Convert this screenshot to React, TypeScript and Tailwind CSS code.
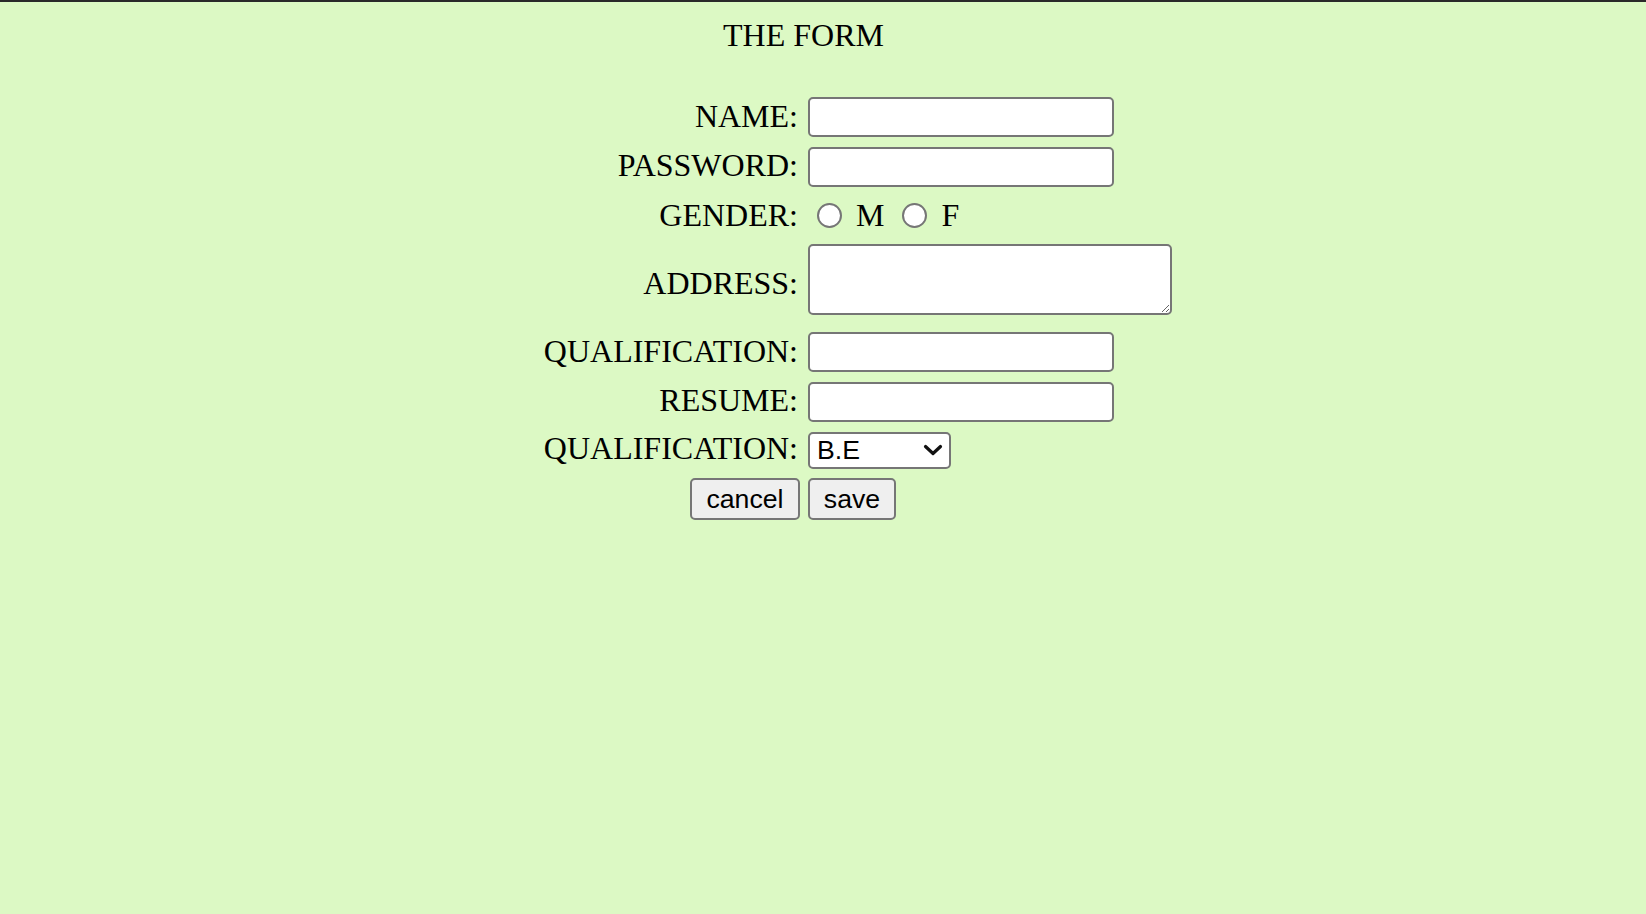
import type { ReactNode } from "react";

// Page is a 2x-scale rendering of a plain HTML table form, so every
// size here is doubled from the browser defaults.
const labelClass =
  "w-[261px] shrink-0 pr-[2px] text-right text-[32px] leading-[36px] text-black";
const fieldClass =
  "w-[306px] h-[40px] rounded-[5px] border-2 border-[#767676] bg-white px-1 text-[26px] outline-none";
const radioClass =
  "appearance-none w-[25px] h-[25px] shrink-0 rounded-full border-2 border-[#767676] bg-white";
const buttonClass =
  "h-[42px] rounded-[5px] border-2 border-[#767676] bg-[#efefef] text-[26.67px] leading-none text-black font-['Liberation_Sans',Arial,sans-serif]";

function Row({
  label,
  labelClassName = "",
  className = "",
  children,
}: {
  label: string;
  labelClassName?: string;
  className?: string;
  children: ReactNode;
}): React.JSX.Element {
  return (
    <div className={`flex items-start gap-[8px] ${className}`}>
      <div className={`${labelClass} ${labelClassName}`}>{label}</div>
      {children}
    </div>
  );
}

export default function App(): React.JSX.Element {
  return (
    <div className="min-h-screen w-full bg-[#dcf9c4] font-['Liberation_Serif','Times_New_Roman',serif] text-black">
      <div className="h-[2px] w-full bg-[#2a2a2a]" />
      <form
        className="ml-[539px] flex flex-col"
        onSubmit={(e) => e.preventDefault()}
      >
        <h1 className="mt-[15px] w-[529px] text-center text-[32px] leading-[36px] font-normal">
          THE FORM
        </h1>

        <Row label="NAME:" labelClassName="mt-[2px]" className="mt-[43px]">
          <input type="text" className={`${fieldClass} mt-[1px]`} />
        </Row>

        <Row label="PASSWORD:" className="mt-[10px]">
          <input type="password" className={fieldClass} />
        </Row>

        <Row label="GENDER:" className="mt-[10px]">
          <div className="flex h-[36px] items-center text-[32px] leading-[36px]">
            <input type="radio" name="gender" className={`${radioClass} ml-[9px]`} />
            <span className="ml-[14px]">M</span>
            <input type="radio" name="gender" className={`${radioClass} ml-[18px]`} />
            <span className="ml-[14px]">F</span>
          </div>
        </Row>

        <Row label="ADDRESS:" labelClassName="mt-[21px]" className="mt-[11px]">
          <textarea className="w-[364px] h-[71px] resize rounded-[5px] border-2 border-[#767676] bg-white px-1 text-[26px] outline-none" />
        </Row>

        <Row label="QUALIFICATION:" labelClassName="mt-[2px]" className="mt-[16px]">
          <input type="text" className={`${fieldClass} mt-[1px]`} />
        </Row>

        <Row label="RESUME:" labelClassName="mt-[1px]" className="mt-[9px]">
          <input type="text" className={`${fieldClass} mt-[1px]`} />
        </Row>

        <Row label="QUALIFICATION:" labelClassName="mt-[2px]" className="mt-[6px]">
          <div className="relative mt-[4px]">
            <select
              defaultValue="B.E"
              className="appearance-none w-[143px] h-[37px] rounded-[5px] border-2 border-[#767676] bg-white pl-[7px] text-[26.67px] leading-none text-black outline-none font-['Liberation_Sans',Arial,sans-serif]"
            >
              <option>B.E</option>
              <option>B.Tech</option>
              <option>M.E</option>
              <option>MBA</option>
            </select>
            <svg
              className="pointer-events-none absolute right-[8px] top-[12px]"
              width="20"
              height="12"
              viewBox="0 0 20 12"
              fill="none"
            >
              <path
                d="M2.5 2.5 L10 9.5 L17.5 2.5"
                stroke="#111"
                strokeWidth="3.2"
                strokeLinecap="round"
                strokeLinejoin="round"
              />
            </svg>
          </div>
        </Row>

        <div className="mt-[9px] flex items-start gap-[8px]">
          <div className="flex w-[261px] shrink-0 justify-end">
            <button type="button" className={`${buttonClass} w-[110px]`}>
              cancel
            </button>
          </div>
          <button type="submit" className={`${buttonClass} w-[88px]`}>
            save
          </button>
        </div>
      </form>
    </div>
  );
}
